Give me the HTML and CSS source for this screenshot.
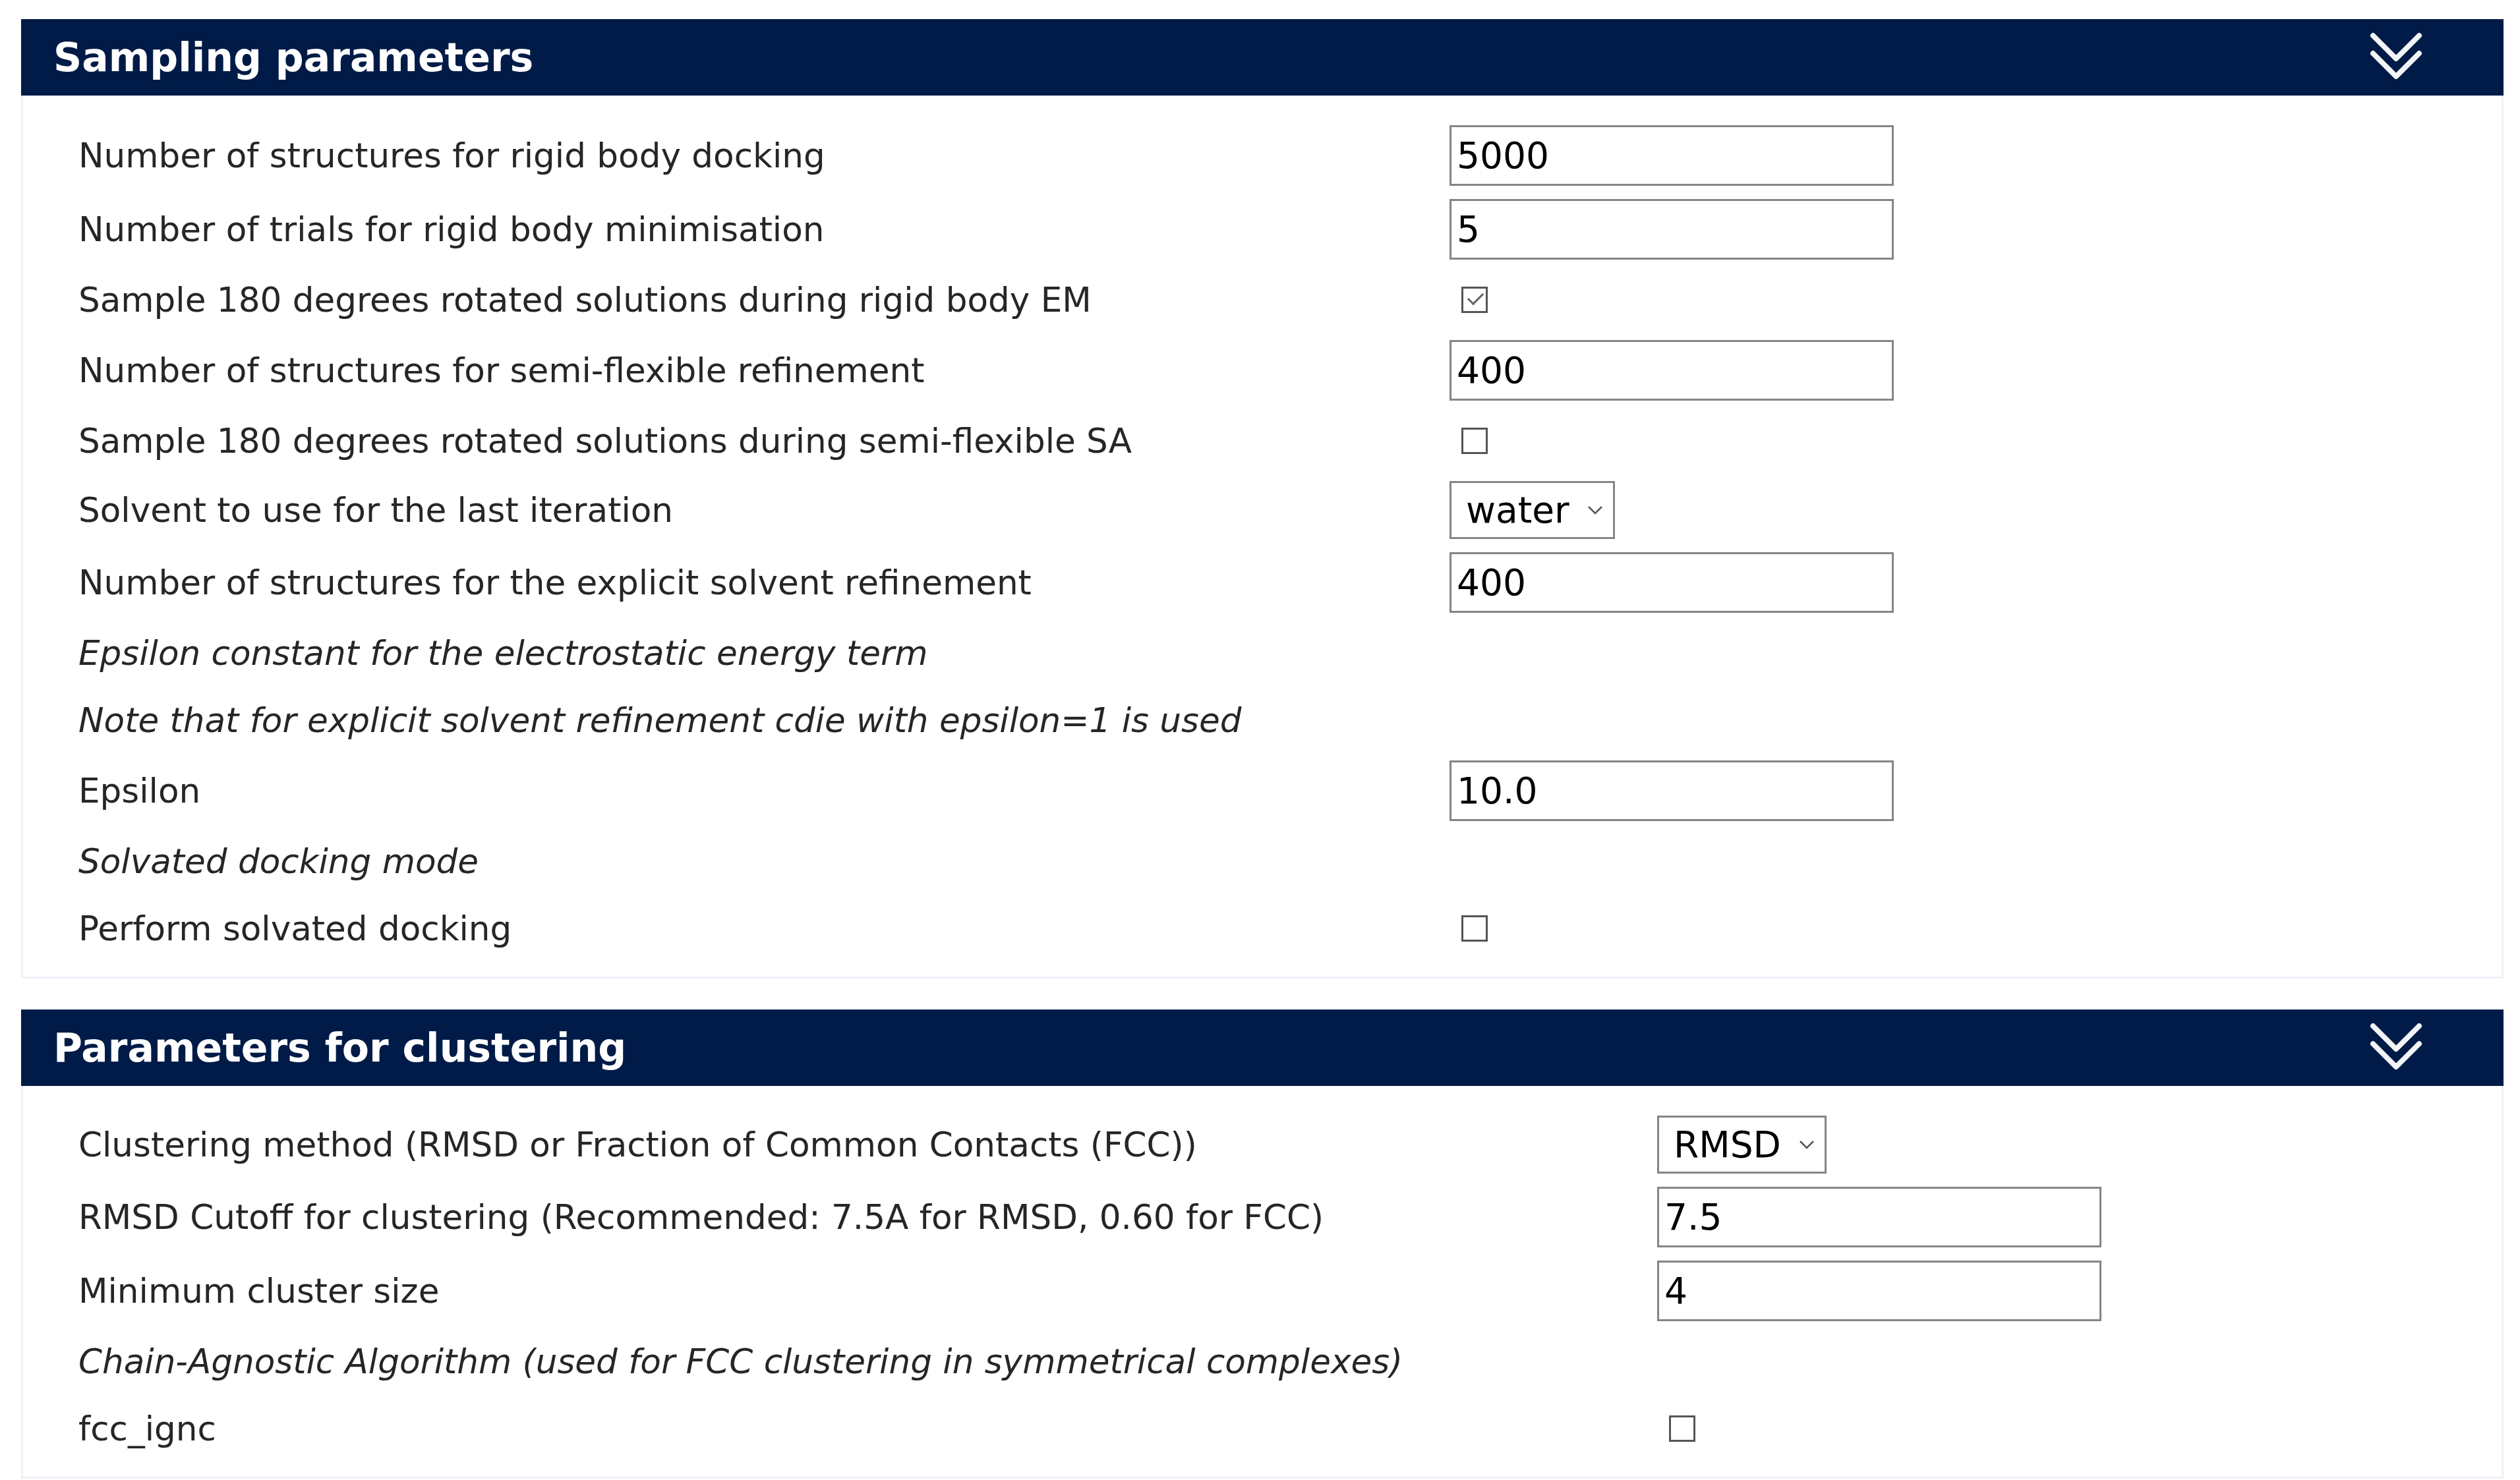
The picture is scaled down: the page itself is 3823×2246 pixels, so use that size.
FILE: index.html
```html
<!DOCTYPE html>
<html lang="en">
<head>
	<meta charset="UTF-8">
	<title>Docking parameters</title>
	<link rel="stylesheet" href="styles.css">
</head>
<body>

	<div class="section">
		<div class="section-head">
			<span class="section-title">Sampling parameters</span>
			<svg class="toggle" viewBox="0 0 80 76" width="80" height="76">
				<polyline points="5,5 40,40 75,5"/>
				<polyline points="5,32 40,67 75,32"/>
			</svg>
		</div>
		<div class="section-body">
			<div class="row">
				<label class="label">Number of structures for rigid body docking</label>
				<div class="field"><input type="text" class="text" value="5000"></div>
			</div>
			<div class="row">
				<label class="label">Number of trials for rigid body minimisation</label>
				<div class="field"><input type="text" class="text" value="5"></div>
			</div>
			<div class="row">
				<label class="label">Sample 180 degrees rotated solutions during rigid body EM</label>
				<div class="field"><input type="checkbox" class="check" checked></div>
			</div>
			<div class="row">
				<label class="label">Number of structures for semi-flexible refinement</label>
				<div class="field"><input type="text" class="text" value="400"></div>
			</div>
			<div class="row">
				<label class="label">Sample 180 degrees rotated solutions during semi-flexible SA</label>
				<div class="field"><input type="checkbox" class="check"></div>
			</div>
			<div class="row">
				<label class="label">Solvent to use for the last iteration</label>
				<div class="field">
					<div class="select">
						<select><option>water</option><option>dmso</option></select>
						<svg viewBox="0 0 24 14" width="24" height="14"><polyline points="2,2 12,12 22,2"/></svg>
					</div>
				</div>
			</div>
			<div class="row">
				<label class="label">Number of structures for the explicit solvent refinement</label>
				<div class="field"><input type="text" class="text" value="400"></div>
			</div>
			<div class="row">
				<span class="label note">Epsilon constant for the electrostatic energy term</span>
			</div>
			<div class="row">
				<span class="label note">Note that for explicit solvent refinement cdie with epsilon=1 is used</span>
			</div>
			<div class="row">
				<label class="label">Epsilon</label>
				<div class="field"><input type="text" class="text" value="10.0"></div>
			</div>
			<div class="row">
				<span class="label note">Solvated docking mode</span>
			</div>
			<div class="row">
				<label class="label">Perform solvated docking</label>
				<div class="field"><input type="checkbox" class="check"></div>
			</div>
		</div>
	</div>

	<div class="section">
		<div class="section-head">
			<span class="section-title">Parameters for clustering</span>
			<svg class="toggle" viewBox="0 0 80 76" width="80" height="76">
				<polyline points="5,5 40,40 75,5"/>
				<polyline points="5,32 40,67 75,32"/>
			</svg>
		</div>
		<div class="section-body wide">
			<div class="row">
				<label class="label">Clustering method (RMSD or Fraction of Common Contacts (FCC))</label>
				<div class="field">
					<div class="select">
						<select><option>RMSD</option><option>FCC</option></select>
						<svg viewBox="0 0 24 14" width="24" height="14"><polyline points="2,2 12,12 22,2"/></svg>
					</div>
				</div>
			</div>
			<div class="row">
				<label class="label">RMSD Cutoff for clustering (Recommended: 7.5A for RMSD, 0.60 for FCC)</label>
				<div class="field"><input type="text" class="text" value="7.5"></div>
			</div>
			<div class="row">
				<label class="label">Minimum cluster size</label>
				<div class="field"><input type="text" class="text" value="4"></div>
			</div>
			<div class="row">
				<span class="label note">Chain-Agnostic Algorithm (used for FCC clustering in symmetrical complexes)</span>
			</div>
			<div class="row">
				<label class="label">fcc_ignc</label>
				<div class="field"><input type="checkbox" class="check"></div>
			</div>
		</div>
	</div>

</body>
</html>
```

FILE: styles.css
```css
body{
	margin: 0;
	padding: 29px 25px 0 32px;
	background: #fff;
	font-family: "DejaVu Sans", "Liberation Sans", sans-serif;
	color: #262626;
}

.section{
	margin-bottom: 47px;
}

.section-head{
	display: flex;
	justify-content: space-between;
	align-items: center;
	height: 116px;
	padding: 0 123px 0 49px;
	background: #001b47;
}

.section-title{
	color: #fff;
	font-size: 60px;
	font-weight: bold;
}

.toggle polyline{
	fill: none;
	stroke: #f2f4f7;
	stroke-width: 8;
	stroke-linecap: round;
	stroke-linejoin: round;
}

.section-body{
	border: 3px solid #edf1f8;
	border-top: none;
	padding: 35px 0 22px 84px;
	--label-w: 2080px;
}

.section-body.wide{
	--label-w: 2395px;
}

.row{
	display: grid;
	grid-template-columns: var(--label-w) 1fr;
	align-items: center;
	padding: 10px 0;
}

.label{
	font-size: 51.6px;
	line-height: 82px;
	white-space: nowrap;
}

.note{
	font-style: italic;
	grid-column: 1 / 3;
}

.field{
	display: flex;
	align-items: center;
}

.text{
	box-sizing: border-box;
	width: 674px;
	height: 92px;
	margin: 0;
	padding: 0 8px;
	border: 3px solid #858585;
	font-family: "DejaVu Sans", "Liberation Sans", sans-serif;
	font-size: 55px;
	color: #000;
	background: #fff;
}

.select{
	display: flex;
	align-items: center;
	box-sizing: border-box;
	height: 88px;
	padding: 0 15px 0 22px;
	border: 3px solid #858585;
	background: #fff;
}

.select select{
	appearance: none;
	-webkit-appearance: none;
	border: none;
	background: none;
	padding: 0;
	margin: 0 27px 0 0;
	font-family: "DejaVu Sans", "Liberation Sans", sans-serif;
	font-size: 55px;
	color: #000;
}

.select svg polyline{
	fill: none;
	stroke: #555;
	stroke-width: 2.5;
}

.check{
	appearance: none;
	-webkit-appearance: none;
	box-sizing: border-box;
	width: 40px;
	height: 40px;
	margin: 0 0 0 18px;
	border: 3px solid #555;
	background: #fff;
	position: relative;
}

.check:checked::before{
	content: "";
	position: absolute;
	left: 7px;
	top: 6px;
	width: 20px;
	height: 10px;
	border-left: 3px solid #666;
	border-bottom: 3px solid #666;
	transform: rotate(-45deg);
}
```
